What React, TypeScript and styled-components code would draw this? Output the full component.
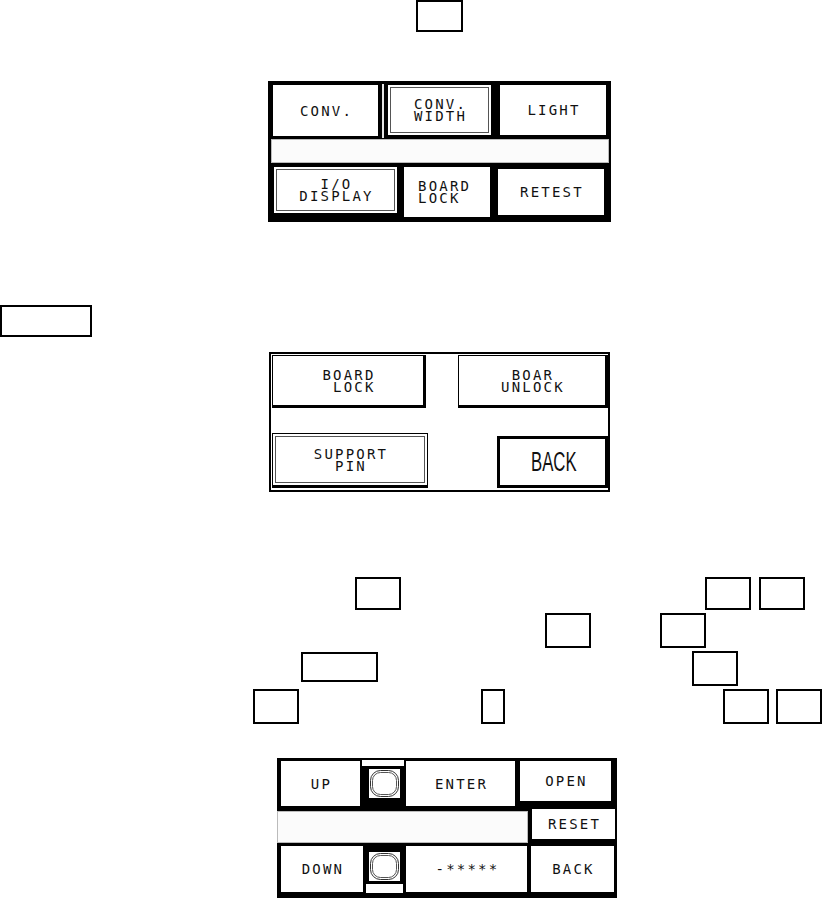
import React from "react";
import styled, { createGlobalStyle, css } from "styled-components";

const Global = createGlobalStyle`
  html, body { margin: 0; padding: 0; background: #fff; }
  body { font-family: "DejaVu Sans Mono", "Liberation Mono", monospace; color: #111; }
  #root { width: 823px; height: 898px; overflow: hidden; }
`;

type Box = { $w: number; $h: number; $ml?: number; $mt?: number };

const Page = styled.div`
  display: flex;
  flex-direction: column;
  width: 823px;
  height: 898px;
  overflow: hidden;
  background: #fff;
`;

const Blank = styled.div<Box>`
  box-sizing: border-box;
  flex: none;
  width: ${(p) => p.$w}px;
  height: ${(p) => p.$h}px;
  margin-left: ${(p) => p.$ml ?? 0}px;
  margin-top: ${(p) => p.$mt ?? 0}px;
  border: 2px solid #000;
  background: #fff;
`;

const BlankLine = styled.div<{ $mt: number; $h: number }>`
  display: flex;
  align-items: flex-start;
  flex: none;
  height: ${(p) => p.$h}px;
  margin-top: ${(p) => p.$mt}px;
`;

const Panel = styled.div<Box & { $tone: "dark" | "light" }>`
  box-sizing: border-box;
  flex: none;
  display: flex;
  flex-direction: column;
  overflow: hidden;
  width: ${(p) => p.$w}px;
  height: ${(p) => p.$h}px;
  margin-left: ${(p) => p.$ml ?? 0}px;
  margin-top: ${(p) => p.$mt ?? 0}px;
  background: ${(p) => (p.$tone === "dark" ? "#000" : "#fff")};
  border: ${(p) => (p.$tone === "light" ? "2px solid #000" : "none")};
`;

const PanelRow = styled.div<{
  $mt?: number;
  $pl?: number;
  $h?: number;
  $align?: string;
  $spread?: boolean;
}>`
  display: flex;
  flex: none;
  align-items: ${(p) => p.$align ?? "flex-start"};
  justify-content: ${(p) => (p.$spread ? "space-between" : "flex-start")};
  margin-top: ${(p) => p.$mt ?? 0}px;
  padding-left: ${(p) => p.$pl ?? 0}px;
  ${(p) => (p.$h ? `height: ${p.$h}px;` : "")}
`;

type KeyVariant = "flat" | "raised" | "pressed" | "framed";

const Key = styled.div<Box & { $variant?: KeyVariant; $left?: boolean }>`
  box-sizing: border-box;
  flex: none;
  width: ${(p) => p.$w}px;
  height: ${(p) => p.$h}px;
  margin-left: ${(p) => p.$ml ?? 0}px;
  margin-top: ${(p) => p.$mt ?? 0}px;
  display: flex;
  align-items: center;
  justify-content: ${(p) => (p.$left ? "flex-start" : "center")};
  padding-left: ${(p) => (p.$left ? 14 : 2)}px;
  background: #fff;
  border: 1px solid #000;
  font-family: "DejaVu Sans Mono", "Liberation Mono", monospace;
  font-size: 14px;
  line-height: 12px;
  letter-spacing: 2.2px;
  white-space: pre;
  text-align: ${(p) => (p.$left ? "left" : "center")};
  color: #111;
  ${(p) =>
    p.$variant === "raised" &&
    css`
      border-width: 1px 3px 3px 1px;
    `}
  ${(p) =>
    p.$variant === "pressed" &&
    css`
      border-width: 1px 1px 3px 1px;
      box-shadow: inset 0 0 0 2px #fff, inset 0 0 0 3px #555;
    `}
  ${(p) =>
    p.$variant === "framed" &&
    css`
      border-width: 3px;
    `}
`;

const BigLabel = styled.span`
  display: inline-block;
  font-family: "Liberation Sans", Arial, sans-serif;
  font-size: 27px;
  letter-spacing: 0;
  line-height: 1;
  transform: scaleX(0.62);
  color: #111;
`;

const Divider = styled.div<{ $ml: number; $h: number }>`
  flex: none;
  width: 2px;
  height: ${(p) => p.$h}px;
  margin-left: ${(p) => p.$ml}px;
  background: #e4e4e4;
`;

const Strip = styled.div<Box>`
  box-sizing: border-box;
  flex: none;
  width: ${(p) => p.$w}px;
  height: ${(p) => p.$h}px;
  margin-left: ${(p) => p.$ml ?? 0}px;
  margin-top: ${(p) => p.$mt ?? 0}px;
  background: #fbfbfb;
  border: 1px solid #bbb;
`;

const LampCell = styled.div<{ $ml: number; $w: number; $h: number }>`
  flex: none;
  display: flex;
  flex-direction: column;
  width: ${(p) => p.$w}px;
  height: ${(p) => p.$h}px;
  margin-left: ${(p) => p.$ml}px;
`;

const LampCap = styled.div<{ $h: number }>`
  flex: none;
  height: ${(p) => p.$h}px;
  background: #fff;
`;

const LampFill = styled.div`
  flex: 1;
  background: #fff;
`;

const LampWrap = styled.div<{ $ml: number; $mt: number }>`
  flex: none;
  display: flex;
  margin-left: ${(p) => p.$ml}px;
  margin-top: ${(p) => p.$mt}px;
`;

const Lamp: React.FC<{ ml: number; mt: number }> = ({ ml, mt }) => (
  <LampWrap $ml={ml} $mt={mt}>
    <svg width="37" height="35" viewBox="0 0 37 35">
      <rect x="0" y="0" width="37" height="35" fill="#000" />
      <rect x="3" y="3" width="31" height="29" fill="#fff" />
      <rect x="4.5" y="4.5" width="28" height="26" rx="10" fill="none" stroke="#333" strokeWidth="1" />
      <rect x="6.5" y="6.5" width="24" height="22" rx="8" fill="none" stroke="#555" strokeWidth="1" />
    </svg>
  </LampWrap>
);

export default function App() {
  return (
    <Page>
      <Global />
      <Blank $w={47} $h={32} $ml={416} />

      <Panel $tone="dark" $w={343} $h={141} $ml={268} $mt={49}>
        <PanelRow $mt={3} $pl={4}>
          <Key $w={107} $h={53}>CONV.</Key>
          <Divider $ml={3} $h={54} />
          <Key $w={105} $h={54} $ml={3} $variant="pressed">{"CONV.\nWIDTH"}</Key>
          <Key $w={108} $h={52} $ml={7}>LIGHT</Key>
        </PanelRow>
        <Strip $w={338} $h={24} $ml={3} $mt={1} />
        <PanelRow $mt={3} $pl={5}>
          <Key $w={125} $h={50} $variant="pressed">{"I/O\nDISPLAY"}</Key>
          <Key $w={88} $h={52} $ml={5} $left>{"BOARD\nLOCK"}</Key>
          <Key $w={108} $h={48} $ml={6} $mt={2}>RETEST</Key>
        </PanelRow>
      </Panel>

      <Blank $w={92} $h={32} $mt={83} />

      <Panel $tone="light" $w={341} $h={140} $ml={269} $mt={15}>
        <PanelRow $mt={1} $pl={1} $spread>
          <Key $w={154} $h={53} $variant="raised">{"BOARD\n LOCK"}</Key>
          <Key $w={150} $h={53} $variant="raised">{"BOAR\nUNLOCK"}</Key>
        </PanelRow>
        <PanelRow $mt={25} $pl={1} $align="flex-end" $spread>
          <Key $w={156} $h={55} $variant="pressed">{"SUPPORT\nPIN"}</Key>
          <Key $w={111} $h={52} $variant="framed">
            <BigLabel>BACK</BigLabel>
          </Key>
        </PanelRow>
      </Panel>

      <BlankLine $mt={85} $h={33}>
        <Blank $w={46} $h={33} $ml={355} />
        <Blank $w={46} $h={33} $ml={304} />
        <Blank $w={46} $h={33} $ml={8} />
      </BlankLine>
      <BlankLine $mt={3} $h={35}>
        <Blank $w={46} $h={35} $ml={545} />
        <Blank $w={46} $h={35} $ml={69} />
      </BlankLine>
      <BlankLine $mt={3} $h={35}>
        <Blank $w={77} $h={30} $ml={301} $mt={1} />
        <Blank $w={46} $h={35} $ml={314} />
      </BlankLine>
      <BlankLine $mt={3} $h={35}>
        <Blank $w={46} $h={35} $ml={253} />
        <Blank $w={24} $h={35} $ml={182} />
        <Blank $w={46} $h={35} $ml={218} />
        <Blank $w={46} $h={35} $ml={7} />
      </BlankLine>

      <Panel $tone="dark" $w={340} $h={140} $ml={277} $mt={34}>
        <PanelRow $mt={2} $pl={3} $h={48}>
          <Key $w={81} $h={47}>UP</Key>
          <LampCell $ml={1} $w={42} $h={41}>
            <LampCap $h={6} />
            <Lamp ml={4} mt={0} />
          </LampCell>
          <Key $w={111} $h={47} $ml={1}>ENTER</Key>
          <Key $w={93} $h={42} $ml={3}>OPEN</Key>
        </PanelRow>
        <PanelRow $h={37}>
          <Strip $w={251} $h={32} $mt={3} />
          <Key $w={85} $h={32} $ml={3}>RESET</Key>
        </PanelRow>
        <PanelRow $pl={3} $h={48}>
          <Key $w={84} $h={48}>DOWN</Key>
          <LampCell $ml={2} $w={37} $h={48}>
            <Lamp ml={0} mt={4} />
            <LampFill />
          </LampCell>
          <Key $w={123} $h={48} $ml={2}>-*****</Key>
          <Key $w={85} $h={48} $ml={2}>BACK</Key>
        </PanelRow>
      </Panel>
    </Page>
  );
}
